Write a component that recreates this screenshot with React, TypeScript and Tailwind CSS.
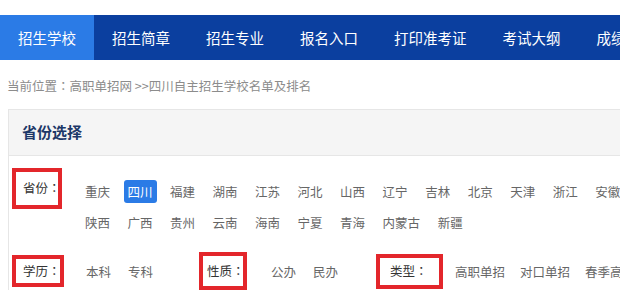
import React from 'react';

const navItems = ['招生学校', '招生简章', '招生专业', '报名入口', '打印准考证', '考试大纲', '成绩查询'];

const provinceRows: string[][] = [
  ['重庆', '四川', '福建', '湖南', '江苏', '河北', '山西', '辽宁', '吉林', '北京', '天津', '浙江', '安徽', '江西'],
  ['陕西', '广西', '贵州', '云南', '海南', '宁夏', '青海', '内蒙古', '新疆'],
];

const font = { fontFamily: '"Noto Sans CJK SC", "Noto Sans", sans-serif' };
// centred full-width colon like the original page's font
const colonFont = { fontFamily: '"Noto Sans CJK JP", "Noto Sans CJK SC", sans-serif' };

const Colon = () => <span style={colonFont}>：</span>;

const Option = ({ text, active = false }: { text: string; active?: boolean }) => (
  <span
    className={`shrink-0 px-1 h-[23px] leading-[23px] rounded-[3px] text-[12.5px] whitespace-nowrap ${
      active ? 'bg-[#2b7be6] text-white' : 'text-[#666666]'
    }`}
  >
    {text}
  </span>
);

export default function App() {
  return (
    <div className="w-[620px] h-[301px] overflow-hidden bg-white" style={font}>
      <div className="h-[15px]" />
      <nav className="flex h-[45px] bg-[#0b3f9f] whitespace-nowrap">
        {navItems.map((item, i) => (
          <a
            key={item}
            className={`shrink-0 px-[18px] leading-[45px] text-[14.5px] text-white ${i === 0 ? 'bg-[#2b7be6]' : ''}`}
          >
            {item}
          </a>
        ))}
      </nav>

      <div className="mt-[16px] h-[20px] pl-[7px] leading-[20px] text-[12.5px] text-[#8c8c8c] whitespace-nowrap">
        当前位置<Colon />高职单招网 &gt;&gt;四川自主招生学校名单及排名
      </div>

      <div className="mt-[13px] ml-[8px] border-l border-t border-[#e6e6e6]">
        <div className="h-[46px] bg-[#f5f5f5] border-b border-[#e6e6e6] pl-[13px] flex items-center">
          <span className="text-[15px] font-bold text-[#1d3868]">省份选择</span>
        </div>

        <div className="pl-[3px] pt-[12px]">
          <div className="flex items-start">
            <div className="shrink-0 w-[50px] h-[41px] border-[4px] border-[#e3262b] flex items-center pl-[7px] text-[12.5px] text-[#333333] whitespace-nowrap">
              省份<Colon />
            </div>
            <div className="ml-[19px] mt-[12px] flex flex-col gap-[8px] overflow-hidden">
              {provinceRows.map((row, r) => (
                <div key={r} className="flex gap-[9.5px]">
                  {row.map((p) => (
                    <Option key={p} text={p} active={p === '四川'} />
                  ))}
                </div>
              ))}
            </div>
          </div>

          <div className="mt-[18px] flex items-center whitespace-nowrap text-[12.5px]">
            <div className="shrink-0 w-[52px] h-[32px] border-[4px] border-[#e3262b] flex items-center pl-[7px] text-[#333333]">
              学历<Colon />
            </div>
            <div className="ml-[18px] flex gap-[9px]">
              <Option text="本科" />
              <Option text="专科" />
            </div>
            <div className="ml-[11px] w-px h-[27px] bg-[#e4e4e4]" />
            <div className="shrink-0 ml-[31px] w-[48px] h-[38px] border-[4px] border-[#e3262b] flex items-center pl-[4px] text-[#333333]">
              性质<Colon />
            </div>
            <div className="ml-[20px] flex gap-[9px]">
              <Option text="公办" />
              <Option text="民办" />
            </div>
            <div className="ml-[10px] w-px h-[27px] bg-[#e4e4e4]" />
            <div className="shrink-0 ml-[24px] w-[67px] h-[35px] border-[4px] border-[#e3262b] flex items-center pl-[10px] text-[#333333]">
              类型<Colon />
            </div>
            <div className="ml-[8px] flex gap-[7px]">
              <Option text="高职单招" />
              <Option text="对口单招" />
              <Option text="春季高考" />
            </div>
          </div>
        </div>
      </div>
    </div>
  );
}
